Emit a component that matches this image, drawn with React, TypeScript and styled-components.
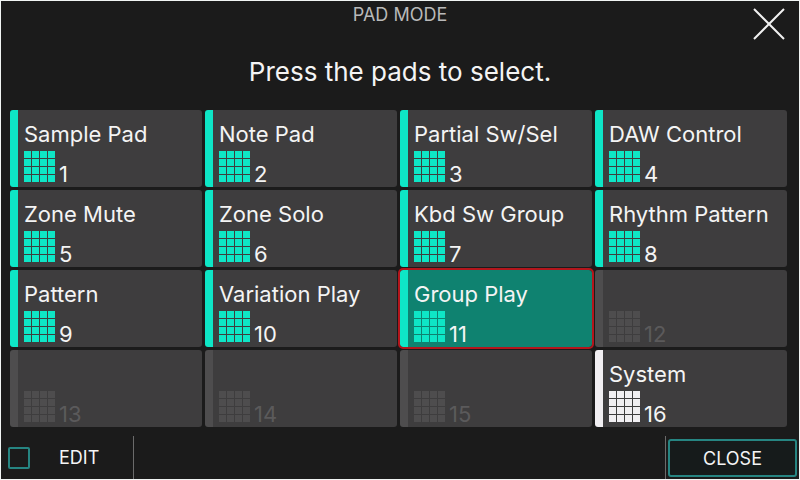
import React, { useState } from "react";
import styled, { createGlobalStyle } from "styled-components";

type Tone = "active" | "disabled" | "system";

interface Pad {
  number: number;
  name: string;
  tone: Tone;
}

const accents: Record<Tone, string> = {
  active: "#0ee6c6",
  disabled: "#4e4d4e",
  system: "#f1eff2",
};

const names = [
  "Sample Pad", "Note Pad", "Partial Sw/Sel", "DAW Control",
  "Zone Mute", "Zone Solo", "Kbd Sw Group", "Rhythm Pattern",
  "Pattern", "Variation Play", "Group Play", "",
  "", "", "", "System",
];

const pads: Pad[] = names.map((name, index) => ({
  number: index + 1,
  name,
  tone: name === "System" ? "system" : name ? "active" : "disabled",
}));

const GlobalStyle = createGlobalStyle`
  *, *::before, *::after { box-sizing: border-box; }
  body {
    margin: 0;
    background: #1b1b1b;
    font-family: Inter, Roboto, sans-serif;
    color: #f4f4f4;
  }
  button { font-family: inherit; color: inherit; cursor: pointer; }
  button:disabled { cursor: default; }
`;

const Screen = styled.main`
  display: flex;
  flex-direction: column;
  min-height: 100vh;
  border: 1px solid #f1f5f4;
  background: #1b1b1b;
`;

const Header = styled.header`
  display: grid;
  grid-template-columns: 48px 1fr 48px;
  padding: 0 6px;
`;

const Title = styled.h1`
  grid-column: 2;
  margin: 0;
  padding-top: 2px;
  text-align: center;
  font-size: 18px;
  line-height: 24px;
  font-weight: 400;
  color: #b9b9b9;
`;

const DismissButton = styled.button`
  display: flex;
  align-items: center;
  justify-content: center;
  height: 46px;
  padding: 0;
  border: 0;
  background: none;
`;

const Instruction = styled.p`
  margin: 0;
  padding: 9px 0 22px;
  text-align: center;
  font-size: 26px;
  line-height: 32px;
`;

const PadGrid = styled.section`
  flex: 1;
  display: grid;
  grid-template-columns: repeat(4, 1fr);
  grid-auto-rows: 1fr;
  gap: 3px;
  padding: 0 12px 9px 9px;
`;

const PadButton = styled.button<{ $tone: Tone; $selected: boolean }>`
  display: flex;
  flex-direction: column;
  justify-content: flex-end;
  gap: 3px;
  min-width: 0;
  min-height: 77px;
  padding: 0 0 5px 6px;
  border: 0;
  border-left: 8px solid ${({ $tone }) => accents[$tone]};
  border-radius: 3px;
  background: ${({ $selected }) => ($selected ? "#0f8270" : "#3e3d3e")};
  outline: ${({ $selected }) => ($selected ? "2px solid #b3161c" : "none")};
  color: ${({ $tone }) => ($tone === "disabled" ? "#5b5a5b" : "#f4f4f4")};
  text-align: left;
`;

const PadName = styled.span`
  font-size: 22px;
  line-height: 28px;
  white-space: nowrap;
`;

const PadMeta = styled.span`
  display: flex;
  align-items: flex-end;
  gap: 4px;
`;

const PadNumber = styled.span`
  font-size: 22px;
  line-height: 16px;
`;

const Footer = styled.footer`
  display: flex;
  justify-content: space-between;
  height: 43px;
`;

const EditLabel = styled.label`
  display: flex;
  align-items: center;
  gap: 29px;
  width: 133px;
  padding-left: 7px;
  border-right: 1px solid #6b6b6b;
  font-size: 18px;
  cursor: pointer;
`;

const EditBox = styled.input`
  appearance: none;
  width: 22px;
  height: 22px;
  margin: 0;
  border: 2px solid #268582;
  border-radius: 2px;
  background: transparent;

  &:checked {
    background: #0ee6c6;
  }
`;

const CloseArea = styled.div`
  display: flex;
  padding: 3px 2px 2px;
  border-left: 1px solid #6b6b6b;
`;

const CloseButton = styled.button`
  width: 129px;
  padding: 0;
  border: 2px solid #268582;
  border-radius: 3px;
  background: #161b1b;
  font-size: 18px;
`;

function PadIcon({ tone }: { tone: Tone }) {
  const cells = Array.from({ length: 16 }, (_, i) => i);
  return (
    <svg width="31" height="31" viewBox="0 0 31 31" fill={accents[tone]} aria-hidden="true">
      {cells.map((i) => (
        <rect key={i} x={(i % 4) * 8} y={Math.floor(i / 4) * 8} width="7" height="7" />
      ))}
    </svg>
  );
}

export default function App() {
  const [selected, setSelected] = useState(11);

  return (
    <>
      <GlobalStyle />
      <Screen>
        <Header>
          <Title>PAD MODE</Title>
          <DismissButton aria-label="Dismiss">
            <svg width="32" height="32" viewBox="0 0 32 32" stroke="#f1f1f1" strokeWidth="2" aria-hidden="true">
              <path d="M1 1 31 31M31 1 1 31" />
            </svg>
          </DismissButton>
        </Header>
        <Instruction>Press the pads to select.</Instruction>
        <PadGrid>
          {pads.map(({ number, name, tone }) => (
            <PadButton
              key={number}
              $tone={tone}
              $selected={number === selected}
              disabled={tone === "disabled"}
              aria-pressed={number === selected}
              onClick={() => setSelected(number)}
            >
              {name && <PadName>{name}</PadName>}
              <PadMeta>
                <PadIcon tone={tone} />
                <PadNumber>{number}</PadNumber>
              </PadMeta>
            </PadButton>
          ))}
        </PadGrid>
        <Footer>
          <EditLabel>
            <EditBox type="checkbox" />
            EDIT
          </EditLabel>
          <CloseArea>
            <CloseButton>CLOSE</CloseButton>
          </CloseArea>
        </Footer>
      </Screen>
    </>
  );
}
